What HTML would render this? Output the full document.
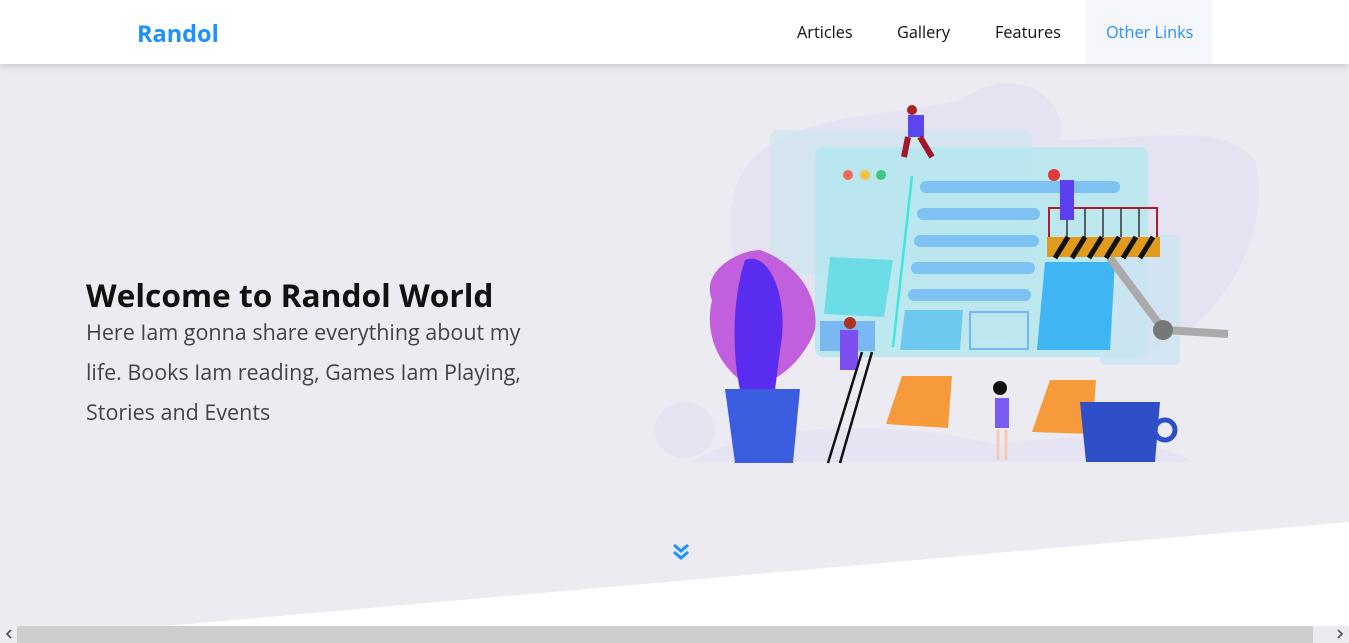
<!DOCTYPE html>
<html><head><meta charset="utf-8"><style>
*{margin:0;padding:0;box-sizing:border-box}
body{width:1349px;height:643px;overflow:hidden;background:#ecebf2;font-family:"Open Sans","Liberation Sans",sans-serif;position:relative}
.nav{position:absolute;left:0;top:0;width:1349px;height:64px;background:#fff;box-shadow:0 2px 8px rgba(0,0,0,.15);z-index:5}
.logo{position:absolute;left:137px;top:17px;font-size:23.5px;font-weight:bold;color:#1e90ff}
.nav a{position:absolute;top:21px;font-size:16.3px;color:#111;text-decoration:none}
.ol{position:absolute;left:1085px;top:0;width:127px;height:64px;background:#f6f7fd}
h1{position:absolute;left:86px;top:274px;font-size:31.7px;font-weight:bold;color:#111}
p{position:absolute;left:86px;top:313px;width:460px;font-size:21.5px;line-height:40px;color:#444}
.sb{position:absolute;left:0;top:626px;width:1349px;height:17px;background:#f1f1f1;font-size:12px;color:#555}
.th{position:absolute;left:17px;top:626px;width:1296px;height:17px;background:#cdcdcd}
</style></head><body>
<div class="nav"><div class="logo">Randol</div>
<div class="ol"></div>
<a style="left:797px">Articles</a><a style="left:897px">Gallery</a><a style="left:995px">Features</a><a style="left:1106px;color:#2a8ff7">Other Links</a></div>
<svg style="position:absolute;left:0;top:0" width="1349" height="643">
<polygon points="1349,522 1349,626 165,626" fill="#fff"/>
<path d="M674 545 l7 6 l7 -6 M674 552 l7 6 l7 -6" stroke="#1e90ff" stroke-width="3" fill="none"/>
<g opacity=".6"><path d="M735 190 C760 110 880 120 960 100 C1020 60 1070 100 1060 140 C1150 140 1220 120 1255 160 C1275 230 1220 330 1150 350 L800 330 C740 300 720 250 735 190Z" fill="#e1def0"/>
<ellipse cx="685" cy="430" rx="30" ry="28" fill="#e1def0"/><path d="M690 462 C760 420 900 420 1000 445 C1080 430 1150 440 1195 462Z" fill="#e3e0f2"/></g>
<rect x="770" y="130" width="262" height="145" rx="8" fill="#cfe6f0" opacity=".7"/>
<rect x="815" y="147" width="333" height="210" rx="8" fill="#b5e7ef" opacity=".85"/>
<rect x="1100" y="235" width="80" height="130" rx="5" fill="#cde3f3" opacity=".8"/>
<circle cx="848" cy="175" r="5" fill="#f16a5a"/><circle cx="865" cy="175" r="5" fill="#f5c242"/><circle cx="881" cy="175" r="5" fill="#3dc87c"/>
<line x1="912" y1="176" x2="893" y2="347" stroke="#3de7de" stroke-width="2.5"/>
<g fill="#7ec1f3"><rect x="920" y="181" width="200" height="12" rx="6"/><rect x="917" y="208" width="123" height="12" rx="6"/><rect x="914" y="235" width="125" height="12" rx="6"/><rect x="911" y="262" width="124" height="12" rx="6"/><rect x="908" y="289" width="123" height="12" rx="6"/></g>
<polygon points="830,257 893,260 884,317 824,314" fill="#6cdde6"/>
<rect x="820" y="321" width="55" height="30" fill="#7ab8f2"/>
<polygon points="905,310 963,310 960,350 900,350" fill="#6ec8ef"/>
<rect x="970" y="312" width="58" height="37" fill="none" stroke="#75b6f4" stroke-width="2"/>
<polygon points="1045,262 1115,262 1110,350 1037,350" fill="#3fb5f4"/>
<path d="M1110 258 L1165 332" stroke="#aaa" stroke-width="8"/><path d="M1165 330 L1228 334" stroke="#aaa" stroke-width="8"/><circle cx="1163" cy="330" r="10" fill="#777"/>
<rect x="1047" y="237" width="113" height="20" fill="#e09a1c"/>
<g stroke="#111" stroke-width="5"><path d="M1055 258 L1068 237 M1072 258 L1085 237 M1089 258 L1102 237 M1106 258 L1119 237 M1123 258 L1136 237 M1140 258 L1153 237"/></g>
<path d="M1049 237 V208 H1157 V237" fill="none" stroke="#b01c2c" stroke-width="2"/>
<g stroke="#333" stroke-width="1.5"><path d="M1067 208V237M1085 208V237M1103 208V237M1121 208V237M1139 208V237"/></g>
<rect x="1060" y="180" width="14" height="40" fill="#5b3ff0"/><circle cx="1054" cy="175" r="6" fill="#e23a3a"/>
<rect x="908" y="115" width="16" height="22" fill="#5b46f0"/><circle cx="912" cy="110" r="5" fill="#a22"/><path d="M908 137 l-4 20 M920 137 l12 20" stroke="#a1182a" stroke-width="6"/>
<path d="M712 300 C700 270 740 250 760 250 C790 260 820 290 815 330 C800 370 760 395 740 380 C715 360 705 330 712 300Z" fill="#c25fdc"/>
<path d="M745 260 C770 250 790 300 780 350 L775 390 L740 390 C730 340 735 290 745 260Z" fill="#5a2cf0"/>
<polygon points="725,389 800,389 793,463 735,463" fill="#3b5ee0"/>
<rect x="840" y="330" width="18" height="40" fill="#7d4ef0"/><circle cx="850" cy="323" r="6" fill="#a32"/>
<path d="M862 352 L828 463 M872 352 L840 463" stroke="#111" stroke-width="2.5"/>
<polygon points="902,376 952,376 948,428 886,424" fill="#f69a3b"/>
<polygon points="1050,380 1096,380 1092,434 1032,432" fill="#f69a3b"/>
<rect x="995" y="398" width="14" height="30" fill="#7b5bf0"/><circle cx="1000" cy="388" r="7" fill="#111"/><path d="M998 430 V460 M1006 430 V460" stroke="#f6c9b0" stroke-width="3"/>
<polygon points="1080,402 1160,402 1155,462 1086,462" fill="#2f4fc8"/><circle cx="1165" cy="430" r="10" fill="none" stroke="#2f4fc8" stroke-width="5"/>
<path d="M11 630 l-4 4 l4 4 M1338 630 l4 4 l-4 4" stroke="#555" stroke-width="1.5" fill="none"/>
</svg>
<h1>Welcome to Randol World</h1>
<p>Here Iam gonna share everything about my life. Books Iam reading, Games Iam Playing, Stories and Events</p>
<div class="th"></div>
<svg style="position:absolute;left:0;top:626px" width="1349" height="17"><path d="M11 4 l-4 4 l4 4 M1338 4 l4 4 l-4 4" stroke="#555" stroke-width="1.5" fill="none"/></svg>
</body></html>
